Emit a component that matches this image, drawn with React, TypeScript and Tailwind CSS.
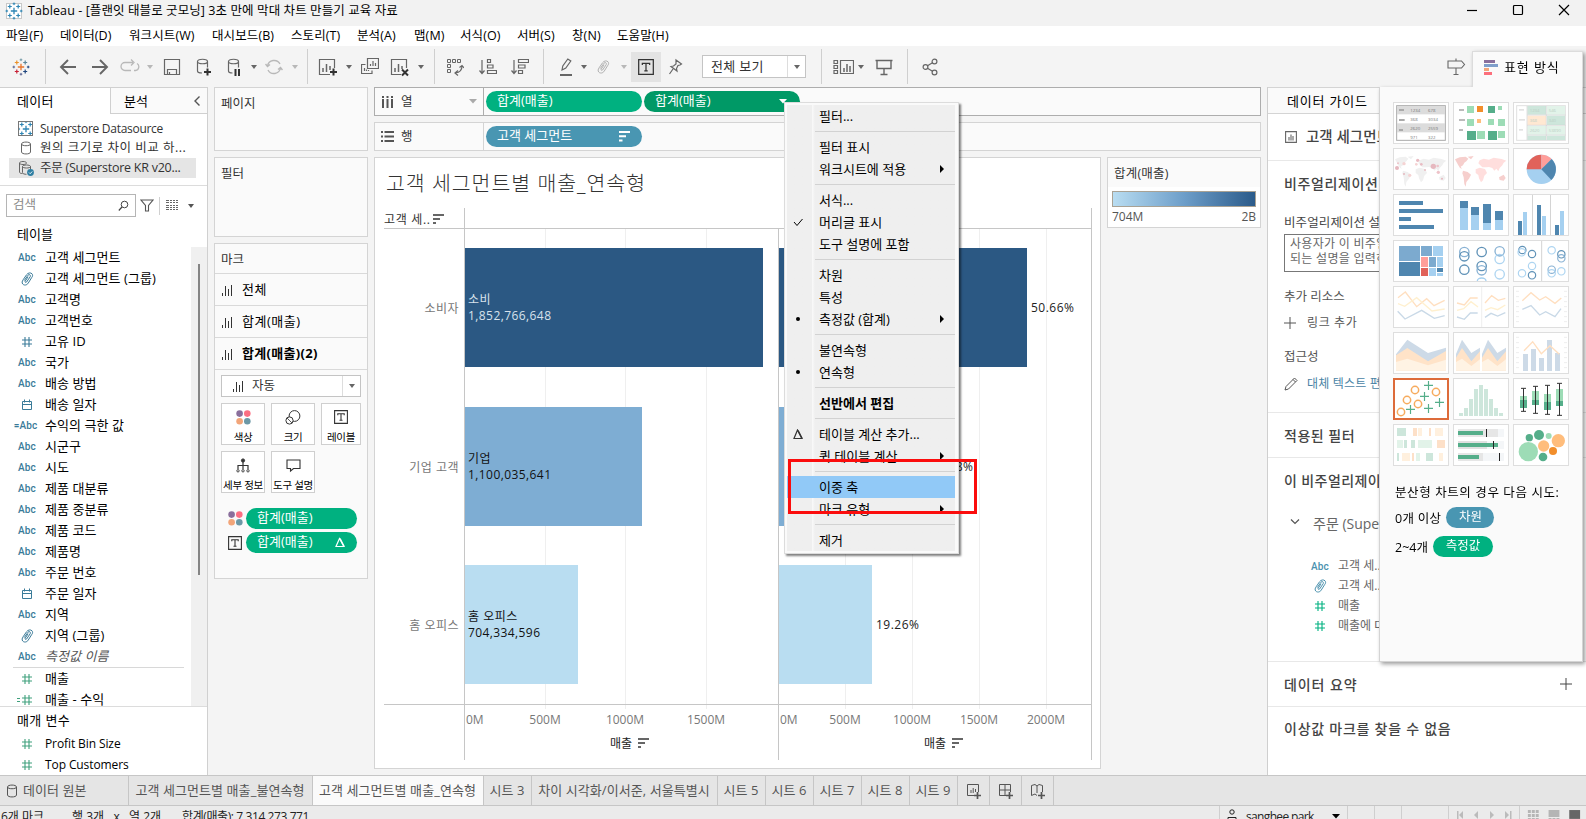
import type { ReactNode } from 'react';

type IconKind = 'abc' | 'clip' | 'hash' | 'date' | 'calcAbc' | 'calcHash';

interface Field {
  label: string;
  kind: IconKind;
  italic?: boolean;
}

const MENUS = [
  { label: '파일(F)', cls: 'w-[54px]' },
  { label: '데이터(D)', cls: 'w-[69px]' },
  { label: '워크시트(W)', cls: 'w-[83px]' },
  { label: '대시보드(B)', cls: 'w-[79px]' },
  { label: '스토리(T)', cls: 'w-[66px]' },
  { label: '분석(A)', cls: 'w-[57px]' },
  { label: '맵(M)', cls: 'w-[46px]' },
  { label: '서식(O)', cls: 'w-[57px]' },
  { label: '서버(S)', cls: 'w-[55px]' },
  { label: '창(N)', cls: 'w-[45px]' },
  { label: '도움말(H)', cls: 'w-[60px]' },
];

const DIMENSIONS: Field[] = [
  { label: '고객 세그먼트', kind: 'abc' },
  { label: '고객 세그먼트 (그룹)', kind: 'clip' },
  { label: '고객명', kind: 'abc' },
  { label: '고객번호', kind: 'abc' },
  { label: '고유 ID', kind: 'hash' },
  { label: '국가', kind: 'abc' },
  { label: '배송 방법', kind: 'abc' },
  { label: '배송 일자', kind: 'date' },
  { label: '수익의 극한 값', kind: 'calcAbc' },
  { label: '시군구', kind: 'abc' },
  { label: '시도', kind: 'abc' },
  { label: '제품 대분류', kind: 'abc' },
  { label: '제품 중분류', kind: 'abc' },
  { label: '제품 코드', kind: 'abc' },
  { label: '제품명', kind: 'abc' },
  { label: '주문 번호', kind: 'abc' },
  { label: '주문 일자', kind: 'date' },
  { label: '지역', kind: 'abc' },
  { label: '지역 (그룹)', kind: 'clip' },
  { label: '측정값 이름', kind: 'abc', italic: true },
];

const MEASURES: Field[] = [
  { label: '매출', kind: 'hash' },
  { label: '매출 - 수익', kind: 'calcHash' },
];

const PARAMETERS: Field[] = [
  { label: 'Profit Bin Size', kind: 'hash' },
  { label: 'Top Customers', kind: 'hash' },
];

interface MenuEntry {
  label: string;
  sub?: boolean;
  mark?: 'check' | 'dot' | 'delta';
  bold?: boolean;
  active?: boolean;
}

const CONTEXT_MENU: MenuEntry[][] = [
  [{ label: '필터...' }],
  [{ label: '필터 표시' }, { label: '워크시트에 적용', sub: true }],
  [{ label: '서식...' }, { label: '머리글 표시', mark: 'check' }, { label: '도구 설명에 포함' }],
  [{ label: '차원' }, { label: '특성' }, { label: '측정값 (합계)', sub: true, mark: 'dot' }],
  [{ label: '불연속형' }, { label: '연속형', mark: 'dot' }],
  [{ label: '선반에서 편집', bold: true }],
  [{ label: '테이블 계산 추가...', mark: 'delta' }, { label: '퀵 테이블 계산', sub: true }],
  [{ label: '이중 축', active: true }, { label: '마크 유형', sub: true }],
  [{ label: '제거' }],
];

/* ---------- small icons ---------- */

function Caret({ className }: { className: string }) {
  return (
    <svg className={`shrink-0 ${className}`} width="6" height="4" viewBox="0 0 6 4">
      <path d="M0 0h6L3 4z" fill="currentColor" />
    </svg>
  );
}

function Svg({ w, h = 20, className = '', children }: { w: number; h?: number; className?: string; children: ReactNode }) {
  return (
    <svg
      className={`shrink-0 ${className}`}
      width={w}
      height={h}
      viewBox={`0 0 ${w} ${h}`}
      fill="none"
      stroke="currentColor"
      strokeWidth="1.2"
    >
      {children}
    </svg>
  );
}

function Clip({ className = '' }: { className?: string }) {
  return (
    <Svg w={13} h={14} className={className}>
      <path d="M3.2 8.6 7 3.2c1-1.4 3.2-.2 2.200 1.500L5.600 10c-.7 1-2 .2-1.400-.8l2.900-4.400M10.600 5.700 7.300 11c-1.500 2.500-4.300 2.500-5.600 1-1-1.300-.6-2.700.4-4.200L5.500 2.800C7 .6 9.700.4 11 1.800c1 1.200.7 2.600-.4 3.900" strokeWidth="1" />
    </Svg>
  );
}

function Hash() {
  return (
    <Svg w={12} h={12}>
      <path d="M4 1v10M8 1v10M1 4h10M1 8h10" strokeWidth="1.100" />
    </Svg>
  );
}

function FieldIcon({ kind }: { kind: IconKind }) {
  switch (kind) {
    case 'abc':
      return <span className="font-['Roboto'] text-[10px] font-medium tracking-[0.2px]">Abc</span>;
    case 'calcAbc':
      return <span className="-ml-[3px] font-['Roboto'] text-[10px] font-medium">=Abc</span>;
    case 'clip':
      return <Clip />;
    case 'date':
      return (
        <Svg w={12} h={12}>
          <path d="M1.500 2.500h9v8h-9zM1.500 5.500h9M3.500.500v3M8.500.500v3" strokeWidth="1" />
        </Svg>
      );
    case 'calcHash':
      return (
        <Svg w={16} h={12} className="-ml-[4px]">
          <path d="M0 4.500h3M0 7.500h3M8 1v10M12 1v10M5 4h10M5 8h10" strokeWidth="1.100" />
        </Svg>
      );
    default:
      return <Hash />;
  }
}

function FieldRow({ field, green }: { field: Field; green?: boolean }) {
  return (
    <div className="flex h-[21px] items-center text-[13px] whitespace-nowrap">
      <span className={`ml-[15px] flex w-6 shrink-0 justify-center ${green ? 'text-[#3fa07c]' : 'text-[#3a7b99]'}`}>
        <FieldIcon kind={field.kind} />
      </span>
      <span className={`ml-[6px] ${field.italic ? 'text-[#555] italic' : 'text-black'}`}>{field.label}</span>
    </div>
  );
}

function SparkleLogo({ mono }: { mono?: boolean }) {
  const c = (color: string) => (mono ? '#2f86b5' : color);
  return (
    <Svg w={18} h={18}>
      <path d="M9 5.800v6.400M5.800 9h6.400" stroke={c('#e8762c')} strokeWidth="1.300" />
      <path d="M4.800 2.500v4M2.800 4.500h4" stroke={c('#eb9129')} />
      <path d="M13.200 2.500v4M11.200 4.500h4" stroke={c('#59879b')} />
      <path d="M4.800 11.500v4M2.800 13.500h4" stroke={c('#c72035')} />
      <path d="M13.200 11.500v4M11.200 13.500h4" stroke={c('#1f457e')} />
      <path d="M9 .500v2.600M7.700 1.800h2.600" stroke={c('#7199a6')} strokeWidth="1" />
      <path d="M9 14.900v2.600M7.700 16.200h2.600" stroke={c('#5b6591')} strokeWidth="1" />
      <path d="M1.800 7.700v2.600M.5 9h2.600" stroke={c('#5b6591')} strokeWidth="1" />
      <path d="M16.200 7.700v2.600M14.900 9h2.600" stroke={c('#1f457e')} strokeWidth="1" />
    </Svg>
  );
}

function SortIcon() {
  return (
    <svg width="11" height="11" viewBox="0 0 11 11" fill="currentColor">
      <path d="M0 0h11v2H0zM0 4.200h7v2H0zM0 8.400h3.500v2H0z" />
    </svg>
  );
}

function MarkBars() {
  return (
    <Svg w={11} h={12} className="text-[#333]">
      <path d="M.5 9v3M3.500 2v10M6.500 5v7M9.500 1v11" strokeWidth="1" />
    </Svg>
  );
}

function TextMark({ size = 14 }: { size?: number }) {
  return (
    <svg width={size} height={size} viewBox="0 0 14 14" fill="none" stroke="#333" className="shrink-0">
      <path d="M.6.6h12.800v12.800H.6zM3.800 5.300V3.800h6.400v1.500M7 3.800v6.500M5.500 10.300h3" strokeWidth="1.100" />
    </svg>
  );
}

function ColorDots() {
  return (
    <svg width="15" height="15" viewBox="0 0 15 15" className="shrink-0">
      <circle cx="3.600" cy="3.600" r="3.300" fill="#8a6f9c" />
      <circle cx="11.300" cy="3.600" r="3.300" fill="#fc6f82" />
      <circle cx="3.600" cy="11.300" r="3.300" fill="#f2a579" />
      <circle cx="11.300" cy="11.300" r="3.300" fill="#6c98a6" />
    </svg>
  );
}

function Database({ className = '' }: { className?: string }) {
  return (
    <Svg w={12} h={14} className={className}>
      <path d="M1.500 3c0-2.600 9-2.600 9 0v8c0 2.600-9 2.600-9 0zM1.500 3c0 2.300 9 2.300 9 0" strokeWidth="1" />
    </Svg>
  );
}

function Sep({ className }: { className: string }) {
  return <span className={`h-[35px] w-px shrink-0 bg-[#cfcfcf] ${className}`} />;
}

/* ---------- window chrome ---------- */

function TitleBar() {
  return (
    <div className="flex h-[26px] shrink-0 items-start bg-[#f2f2f2]">
      <span className="ml-[6px] mt-[3px] flex size-4 items-center justify-center border border-[#c8c8c8] bg-white">
        <SparkleLogo mono />
      </span>
      <span className="ml-[6px] text-[12.500px] leading-[21px] tracking-[0.090px] text-black">
        Tableau - [플랜잇 태블로 굿모닝] 3초 만에 막대 차트 만들기 교육 자료
      </span>
      <span className="ml-auto flex items-center pt-[3px] pr-[16px] text-black">
        <Svg w={12} h={14} className="mr-[34px]"><path d="M1 7.500h10" /></Svg>
        <Svg w={12} h={14} className="mr-[34px]"><rect x="1.500" y="2.500" width="9" height="9" rx="1" /></Svg>
        <Svg w={12} h={14}><path d="m1 2 10 10M11 2 1 12" /></Svg>
      </span>
    </div>
  );
}

function MenuBar() {
  return (
    <nav className="flex h-5 shrink-0 items-center bg-white pt-px pl-[6px] text-[12.500px] tracking-[0.100px] text-black">
      {MENUS.map((m) => (
        <span key={m.label} className={`shrink-0 whitespace-nowrap ${m.cls}`}>{m.label}</span>
      ))}
    </nav>
  );
}

function Toolbar() {
  return (
    <div className="flex h-[41px] shrink-0 items-center bg-[#f4f4f4] text-[#666]">
      <span className="ml-3"><SparkleLogo /></span>
      <Sep className="ml-[15px]" />
      <Svg w={18} className="ml-[13px]"><path d="M9 3 2 10l7 7M2 10h15" strokeWidth="1.900" /></Svg>
      <Svg w={18} className="ml-[14px]"><path d="m9 3 7 7-7 7M16 10H1" strokeWidth="1.900" /></Svg>
      <Svg w={20} className="ml-[11px] text-[#b8b8b8]"><path d="M11 13.500H5a3.500 3.500 0 0 1 0-8h8M17 6.500a3.800 3.800 0 0 1-1.500 7h-1.500M11 2.500l3 3-3 3" strokeWidth="1.300" /></Svg>
      <Caret className="ml-[7px] text-[#b8b8b8]" />
      <Svg w={18} className="ml-[10px]"><path d="M1.500 2.500h15v15h-15zM4.500 17.500V12.500h9v5M6.500 17.500v-2.500" /></Svg>
      <Svg w={18} className="ml-[14px]">
        <path d="M2.500 4.500c0-3 10-3 10 0v6M2.500 4.500c0 3 10 3 10 0M2.500 4.500v9.500c0 1.300 2 2 4.500 2" />
        <path d="M12.500 11.500v7M9 15h7" stroke="#333" strokeWidth="2" />
      </Svg>
      <Svg w={16} className="ml-[13px]">
        <path d="M2.500 4.500c0-3 10-3 10 0v6M2.500 4.500c0 3 10 3 10 0M2.500 4.500v9.500c0 1.300 1.500 2 4 2" />
        <path d="M9.500 12v7M13 12v7" stroke="#333" strokeWidth="2" />
      </Svg>
      <Caret className="ml-[9px]" />
      <Svg w={18} className="ml-[8px] text-[#b8b8b8]"><path d="M2.500 9A6.700 6.700 0 0 1 15 7M15.500 11A6.700 6.700 0 0 1 3 13M.5 7l2 2.500L5 7.500M17.500 13l-2-2.500-2.500 2" strokeWidth="1.400" /></Svg>
      <Caret className="ml-[9px] text-[#b8b8b8]" />
      <Sep className="ml-[9px]" />
      <Svg w={20} className="ml-[10px]">
        <path d="M12 17.500H1.500v-15h15V11" />
        <path d="M5 11v4M8.500 7v8M12 9v4" strokeWidth="1.500" />
        <path d="M15.500 11.500v7M12 15h7" stroke="#333" strokeWidth="2" />
      </Svg>
      <Caret className="ml-[8px]" />
      <Svg w={18} className="ml-[9px]">
        <path d="M6.500 1.500h11v10h-11zM4.500 7.500h-4v9h10.500v-3M9.500 7v2M12 4v5M14.500 6v3M3.500 11v3M5.500 12.500V14M7.500 13v1" />
      </Svg>
      <Svg w={20} className="ml-[11px]">
        <path d="M11 17.500H1.500v-15h15V11" />
        <path d="M5 11v4M8.500 7v8M12 9v3" strokeWidth="1.500" />
        <path d="m12 12.500 6 6M18 12.500l-6 6" stroke="#333" strokeWidth="2" />
      </Svg>
      <Caret className="ml-[8px]" />
      <Sep className="ml-[10px]" />
      <Svg w={18} className="ml-[11px]">
        <path d="M1.500 2.500h3v3h-3zM6.500 2.500h3v3h-3zM11.500 2.500h3v3h-3zM1.500 7.500h3v3h-3zM1.500 12.500h3v3h-3z" strokeWidth="1" />
        <path d="M16 9c0 4-3 6.500-6.500 7M13.500 10.500 16 8.500l2 2.500M12 13.500 9 16l3 2.500" />
      </Svg>
      <Svg w={18} className="ml-[15px]">
        <path d="M3 3v13M.5 13.500 3 16.500l2.500-3M8.500 2.500h3v3h-3zM8.500 8h5.500v3H8.500zM8.500 13.500h9v3h-9z" />
      </Svg>
      <Svg w={18} className="ml-[14px]">
        <path d="M3 3v13M.5 13.500 3 16.500l2.500-3M7.500 2.500h10v3h-10zM7.500 8h6.500v3H7.500zM7.500 13.500h4v3h-4z" />
      </Svg>
      <Sep className="ml-[14px]" />
      <Svg w={14} className="ml-[15px]">
        <path d="m3 13 .8-4 5-7 3 2-5 7zM3 13l4-2" />
        <path d="M1 18h12" strokeWidth="2" />
      </Svg>
      <Caret className="ml-[8px]" />
      <Clip className="ml-[10px] text-[#b0b0b0]" />
      <Caret className="ml-[11px] text-[#b8b8b8]" />
      <span className="ml-1 flex size-[30px] shrink-0 items-center justify-center bg-[#e3e3e3]"><TextMark size={16} /></span>
      <Svg w={15} className="ml-[7px]">
        <path d="m8 3 5.500 4-1.500 1-2 .5-1.500 3 .5 2.500-6-4.500 2.500-.5L8 7zM5 12l-3.500 5" />
      </Svg>
      <span className="ml-[19px] flex h-[23px] w-[104px] shrink-0 items-center border border-[#c4c4c4] bg-white text-[13px] text-[#333]">
        <span className="w-[85px] border-r border-[#ddd] pl-[8px] leading-[21px] tracking-[0.300px]">전체 보기</span>
        <Caret className="ml-[6px] text-[#666]" />
      </span>
      <Sep className="ml-[15px]" />
      <Svg w={21} className="ml-[11px]">
        <path d="M1 3.500h3.500v3H1zM1 8.500h3.500v3H1zM1 13.500h3.500v3H1zM7.500 3.500h13v13h-13z" />
        <path d="M11 11v4M14 7v8M17 9v6" strokeWidth="1.500" />
      </Svg>
      <Caret className="ml-[4px]" />
      <Svg w={18} className="ml-[11px]"><path d="M.5 3.500h17M2 3.500h14v8H2zM9 11.500v5.500M5.500 17.500h7" strokeWidth="1.400" /></Svg>
      <Sep className="ml-[14px]" />
      <Svg w={16} className="ml-[14px]">
        <circle cx="3.500" cy="10" r="2.400" />
        <circle cx="12.500" cy="4.500" r="2.400" />
        <circle cx="12.500" cy="15.500" r="2.400" />
        <path d="m5.500 8.700 5-3M5.500 11.300l5 3" />
      </Svg>
      <Svg w={20} className="ml-[508px]"><path d="M2 4h13.500l3 3.500-3 3.500H2zM10 1.500V4M10 11v6.500M7.500 17.500h5" strokeWidth="1.100" /></Svg>
    </div>
  );
}

/* ---------- data pane ---------- */

function DataPane() {
  return (
    <aside className="flex w-52 shrink-0 flex-col border-r border-[#d0d0d0] bg-white">
      <div className="flex h-[27px] shrink-0 border-t border-[#d0d0d0] text-[13px] leading-[26px] text-black">
        <span className="w-[110px] pl-[17px] tracking-[0.300px]">데이터</span>
        <span className="flex flex-1 items-center border-b border-l border-[#d0d0d0] bg-[#fafafa] pl-[13px]">
          분석
          <Svg w={8} h={12} className="mr-[6px] ml-auto text-[#555]"><path d="M6.500 1.500 2 6l4.500 4.500" strokeWidth="1.400" /></Svg>
        </span>
      </div>
      <div className="h-[72px] shrink-0 border-b border-[#dcdcdc] pt-[5px] pl-[9px] text-[12.500px] text-[#333]">
        <div className="flex h-[19px] items-center">
          <span className="ml-[9px] flex size-[15px] items-center justify-center overflow-hidden border border-[#777]"><SparkleLogo mono /></span>
          <span className="ml-[7px] text-[12px] tracking-[-0.280px]">Superstore Datasource</span>
        </div>
        <div className="flex h-5 items-center">
          <Database className="ml-[11px] text-[#666]" />
          <span className="ml-[8px] tracking-[0.500px] whitespace-nowrap">원의 크기로 차이 비교 하...</span>
        </div>
        <div className="flex h-5 w-[187px] items-center bg-[#e5e5e5]">
          <Svg w={16} h={16} className="ml-[9px] text-[#666]">
            <path d="M1.500 3c0-2 7-2 7 0M1.500 3v9c0 1 1 1.500 3 1.500M1.500 3c0 2 7 2 7 0M4.500 6.500c0-2 8-2 8 0v3M4.500 6.500c0 2 8 2 8 0M4.500 6.500v6c0 1.300 2 1.800 4 1.800" strokeWidth="1" />
            <circle cx="12.500" cy="12.500" r="3.400" fill="#2f7fa3" stroke="none" />
            <path d="m11 12.500 1.200 1.200 2-2.200" stroke="#fff" strokeWidth=".9" />
          </Svg>
          <span className="ml-[6px] pt-px text-[12.500px] tracking-[-0.250px] whitespace-nowrap">주문 (Superstore KR v20...</span>
        </div>
      </div>
      <div className="flex h-[38px] shrink-0 items-center pt-[1px]">
        <span className="ml-[6px] flex h-[23px] w-[130px] items-center justify-between border border-[#b5b5b5] pr-[6px] pl-[6px] text-[12.500px] text-[#888]">
          검색
          <Svg w={11} h={12} className="text-[#444]"><circle cx="6.500" cy="4.500" r="3.300" strokeWidth="1" /><path d="M4 7 .8 10.500" /></Svg>
        </span>
        <Svg w={14} h={13} className="ml-1 text-[#555]"><path d="M1 1h12L8.500 6.500V12h-3V6.500z" strokeWidth="1.100" /></Svg>
        <span className="ml-[5px] h-[18px] w-px bg-[#d0d0d0]" />
        <svg width="13" height="11" viewBox="0 0 13 11" fill="#666" className="ml-[6px] shrink-0">
          {[0, 2, 5, 7, 9].map((y) => (
            <path key={y} d={`M0 ${y}h3v1H0zM4 ${y}h2v1H4zM7 ${y}h2v1H7zM10 ${y}h2v1h-2z`} />
          ))}
        </svg>
        <Caret className="ml-[9px] text-[#555]" />
      </div>
      <div className="h-[23px] shrink-0 pl-[17px] text-[13px] leading-[20px] text-black">테이블</div>
      <div className="flex h-[460px] shrink-0 overflow-hidden border-b border-[#dcdcdc]">
        <div className="w-[191px] shrink-0 tracking-[0.060px]">
          {DIMENSIONS.map((f) => <FieldRow key={f.label} field={f} />)}
          <div className="ml-[13px] h-px w-[171px] bg-[#d8d8d8]" />
          {MEASURES.map((f) => <FieldRow key={f.label} field={f} green />)}
        </div>
        <div className="flex-1 bg-[#f0f0f0] pt-[17px] pl-[7px]">
          <div className="h-[311px] w-[2px] bg-[#858585]" />
        </div>
      </div>
      <div className="h-[26px] shrink-0 pl-[17px] text-[13px] leading-[26px] tracking-[0.400px] text-black">매개 변수</div>
      {PARAMETERS.map((f) => (
        <div key={f.label} className="text-[12px] tracking-[-0.100px] [&_span]:text-[12px]"><FieldRow field={f} green /></div>
      ))}
    </aside>
  );
}

/* ---------- pages / filters / marks ---------- */

function MarkButton({ label, cls, children }: { label: string; cls: string; children: ReactNode }) {
  return (
    <span className={`flex h-[42px] flex-col items-center justify-between border border-[#cfcfcf] bg-white pt-[6px] text-[10.500px] leading-[13px] whitespace-nowrap text-black ${cls}`}>
      {children}
      <span className="tracking-[-0.300px]">{label}</span>
    </span>
  );
}

function CardsColumn() {
  return (
    <div className="ml-[6px] flex w-[154px] shrink-0 flex-col gap-[6px] text-[12.500px] text-[#333]">
      <div className="h-[64px] border border-[#d4d4d4] bg-[#fafafa] pl-[6px] leading-[31px]">페이지</div>
      <div className="h-[80px] border border-[#d4d4d4] bg-[#fafafa] pl-[6px] leading-[31px]">필터</div>
      <div className="h-[336px] border border-[#d4d4d4] bg-[#fafafa]">
        <div className="h-[30px] border-b border-[#d9d9d9] pl-[6px] leading-[31px]">마크</div>
        {['전체', '합계(매출)', '합계(매출)(2)'].map((t, i) => (
          <div key={t} className={`flex h-8 items-center gap-[9px] border-b border-[#d9d9d9] pl-[7px] text-[13px] text-black ${i === 2 ? 'font-bold tracking-[0.300px]' : 'tracking-[0.500px]'}`}>
            <MarkBars />{t}
          </div>
        ))}
        <div className="mx-[6px] mt-[5px] flex h-[22px] w-[140px] items-center border border-[#c4c4c4] bg-white">
          <span className="flex h-full w-[121px] items-center gap-[8px] border-r border-[#ddd] pl-[11px]"><MarkBars />자동</span>
          <Caret className="ml-[6px] text-[#666]" />
        </div>
        <div className="mt-[6px] ml-[6px] flex w-[141px] flex-wrap gap-x-[6px] gap-y-[6px]">
          <MarkButton label="색상" cls="w-11"><ColorDots /></MarkButton>
          <MarkButton label="크기" cls="w-11">
            <Svg w={16} h={15} className="text-[#333]"><circle cx="9.500" cy="6" r="5.400" strokeWidth="1" /><circle cx="4.500" cy="10.500" r="3.600" fill="#fff" strokeWidth="1" /><path d="m2 8 5 5" strokeWidth=".8" /></Svg>
          </MarkButton>
          <MarkButton label="레이블" cls="w-10"><TextMark /></MarkButton>
          <MarkButton label="세부 정보" cls="w-11">
            <Svg w={14} h={15} className="text-[#333]"><circle cx="7" cy="2.500" r="1.600" fill="currentColor" strokeWidth="1" /><path d="M7 4v7M2 11V7.500h10V11" /><circle cx="2" cy="12.800" r="1.200" strokeWidth=".9" /><circle cx="7" cy="12.800" r="1.200" strokeWidth=".9" /><circle cx="12" cy="12.800" r="1.200" strokeWidth=".9" /></Svg>
          </MarkButton>
          <MarkButton label="도구 설명" cls="w-11">
            <Svg w={15} h={15} className="text-[#333]"><path d="M1 2h13v8.500H7.500L4.500 13v-2.500H1z" strokeWidth="1.100" /></Svg>
          </MarkButton>
        </div>
        <div className="mt-[15px] ml-[13px] flex flex-col gap-[3px] text-[13px] text-white">
          <div className="flex h-[21px] items-center gap-[3px]">
            <ColorDots />
            <span className="flex h-[21px] w-[111px] items-center rounded-full bg-[#00b180] pb-[2px] pl-[11px]">합계(매출)</span>
          </div>
          <div className="flex h-[21px] items-center gap-[4px]">
            <TextMark />
            <span className="flex h-[21px] w-[111px] items-center justify-between rounded-full bg-[#00b180] pr-[12px] pb-[2px] pl-[11px]">
              합계(매출)
              <Svg w={10} h={11} className="mt-[2px]"><path d="M4.500 1.500 1 9.500h8z" /><path d="M5 1.500 9 9.500" strokeWidth="1.600" /></Svg>
            </span>
          </div>
        </div>
      </div>
    </div>
  );
}

/* ---------- shelves ---------- */

function Shelves() {
  return (
    <>
      <div className="flex h-[29px] items-center border border-[#adadad] bg-[#fafafa] text-[13px]">
        <span className="flex h-full w-[109px] shrink-0 items-center border-r border-[#adadad] pl-[7px] text-[#333]">
          <svg width="11" height="12" viewBox="0 0 11 12" fill="#555"><path d="M0 0h2v2H0zM4.500 0h2v2h-2zM9 0h2v2H9zM0 3h2v9H0zM4.500 3h2v9h-2zM9 3h2v9H9z" /></svg>
          <span className="ml-[8px] pt-[2px] text-[12.500px]">열</span>
          <svg width="8" height="5" viewBox="0 0 8 5" className="mr-[6px] ml-auto"><path d="M0 0h8L4 4.500z" fill="#aaa" /></svg>
        </span>
        <span className="ml-[2px] h-[21px] w-[156px] shrink-0 rounded-full bg-[#00b180] pl-[11px] leading-[18px] text-white">합계(매출)</span>
        <span className="ml-[2px] flex h-[21px] w-[156px] shrink-0 rounded-full bg-[#009966] pl-[11px] leading-[18px] text-white">
          합계(매출)
          <svg width="8" height="5" viewBox="0 0 8 5" className="mt-[8px] mr-[13px] ml-auto"><path d="M0 0h8L4 4.500z" fill="#fff" /></svg>
        </span>
      </div>
      <div className="mt-[6px] flex h-[29px] items-center border border-[#d4d4d4] bg-[#fafafa] text-[13px]">
        <span className="flex h-full w-[109px] shrink-0 items-center border-r border-[#d4d4d4] pl-[6px] text-[#333]">
          <svg width="13" height="11" viewBox="0 0 13 11" fill="#555"><path d="M0 0h2v2H0zM3.500 0H13v2H3.500zM0 4.500h2v2H0zM3.500 4.500H13v2H3.500zM0 9h2v2H0zM3.500 9H13v2H3.500z" /></svg>
          <span className="ml-[7px] pt-[2px] text-[12.500px]">행</span>
        </span>
        <span className="ml-[2px] flex h-[21px] w-[156px] shrink-0 justify-between rounded-full bg-[#4996b2] pr-[12px] pl-[11px] leading-[18px] text-white">
          고객 세그먼트
          <span className="pt-[5px]"><SortIcon /></span>
        </span>
      </div>
    </>
  );
}

/* ---------- bar chart ---------- */

const ROWS = [
  { name: '소비자', mark: '소비', value: '1,852,766,648', pct: '50.66%', y: 90, w1: 298, w2: 248, fill: '#2b5883', ink: '#d8e2ec' },
  { name: '기업 고객', mark: '기업', value: '1,100,035,641', pct: '30.08%', y: 249, w1: 177, w2: 147, fill: '#7eadd3', ink: '#111' },
  { name: '홈 오피스', mark: '홈 오피스', value: '704,334,596', pct: '19.26%', y: 407, w1: 113, w2: 93, fill: '#b9ddf1', ink: '#111' },
];

function Ticks({ xs, labels }: { xs: number[]; labels: string[] }) {
  return (
    <>
      {xs.map((x, i) => (
        <g key={x}>
          <path d={`M${x + 0.5} 71v480`} stroke="#efefef" />
          <text x={x} y="566" textAnchor="middle" fill="#787878">{labels[i]}</text>
        </g>
      ))}
    </>
  );
}

function SortGlyph({ x, y }: { x: number; y: number }) {
  return <path d={`M${x} ${y}h11v2h-11zM${x} ${y + 4}h7v2h-7zM${x} ${y + 8}h3v2h-3z`} fill="#666" />;
}

function Worksheet() {
  return (
    <div className="w-[727px] shrink-0 border border-[#d4d4d4] bg-white">
      <svg width="725" height="610" viewBox="0 0 725 610" fontSize="12" className="block">
        <text x="11" y="33" fontSize="20.500" fontWeight="300" fill="#333" textLength="259">고객 세그먼트별 매출_연속형</text>
        <text x="9" y="66" fontSize="12" fill="#333" textLength="46">고객 세..</text>
        <SortGlyph x={58} y={56} />
        <Ticks xs={[170, 250, 331]} labels={['500M', '1000M', '1500M']} />
        <Ticks xs={[470, 537, 604, 671]} labels={['500M', '1000M', '1500M', '2000M']} />
        <text x="91" y="566" fill="#787878">0M</text>
        <text x="405" y="566" fill="#787878">0M</text>
        {ROWS.map((r) => (
          <g key={r.name}>
            <rect x="90" y={r.y} width={r.w1} height="119" fill={r.fill} />
            <rect x="404" y={r.y} width={r.w2} height="119" fill={r.fill} />
            <text x="84" y={r.y + 65} textAnchor="end" fill="#777" letterSpacing=".5">{r.name}</text>
            <text x="93" y={r.y + 56} fill={r.ink} letterSpacing=".5">{r.mark}</text>
            <text x="93" y={r.y + 72} fill={r.ink} textLength={r.value.length > 11 ? 83 : 72}>{r.value}</text>
            <text x={404 + r.w2 + 4} y={r.y + 64} fill="#222" textLength="43">{r.pct}</text>
          </g>
        ))}
        <path d="M9 70.500h708M9 546.500h708M89.500 50v552M403.500 71v531M716.500 50v552" stroke="#c6c6c6" fill="none" />
        <text x="235" y="590" fill="#222">매출</text>
        <SortGlyph x={263} y={580} />
        <text x="549" y="590" fill="#222">매출</text>
        <SortGlyph x={577} y={580} />
      </svg>
    </div>
  );
}

function Legend() {
  return (
    <div className="h-[71px] w-[154px] border border-[#d4d4d4] bg-white">
      <div className="h-[29px] bg-[#fafafa] pl-[6px] text-[12.500px] leading-[32px] tracking-[0.200px] text-[#333]">합계(매출)</div>
      <div className="mx-[4px] mt-[4px] h-4 border border-[#a9a294] bg-linear-to-r from-[#b9ddf1] via-[#6d9ec9] to-[#2b5b8a]" />
      <div className="flex justify-between px-[4px] text-[12px] leading-[19px] text-[#555]">
        <span>704M</span>
        <span>2B</span>
      </div>
    </div>
  );
}

/* ---------- data guide ---------- */

function DataGuide() {
  return (
    <section className="ml-[6px] flex w-[319px] shrink-0 flex-col overflow-hidden border-l border-[#cfcfcf] bg-white whitespace-nowrap text-[#444]">
      <div className="h-[27px] shrink-0 border-y border-[#d4d4d4] bg-[#fafafa] pl-[19px] text-[13px] leading-[26px] tracking-[0.800px] text-black">데이터 가이드</div>
      <div className="flex h-[47px] shrink-0 items-center border-b border-[#e8e8e8] pl-[17px] text-[14.500px] font-medium">
        <Svg w={12} h={12} className="mr-[9px] text-[#666]"><path d="M.6.6h10.800v10.800H.6z" strokeWidth="1.100" /><path d="M3 9.500V6h2V3.500h2V5h2v4.500z" fill="#aaa" stroke="none" /></Svg>
        고객 세그먼트별 매출
      </div>
      <div className="h-[252px] shrink-0 border-b border-[#e8e8e8] pl-[16px]">
        <div className="h-[46px] text-[14px] leading-[46px] font-medium tracking-[0.600px]">비주얼리제이션</div>
        <div className="h-[27px] text-[12.500px] leading-[32px] tracking-[0.100px]">비주얼리제이션 설명</div>
        <div className="h-[38px] w-[280px] border border-[#777] px-[5px] py-px text-[12px] leading-[15px] tracking-[0.300px] text-[#666]">
          사용자가 이 비주얼리제이션을<br />되는 설명을 입력하세요
        </div>
        <div className="h-[48px] text-[12.500px] leading-[50px] text-[#555]">추가 리소스</div>
        <div className="flex h-[6px] items-center text-[12px] text-[#555]">
          <Svg w={12} h={12} className="mr-[11px]"><path d="M6 0v12M0 6h12" strokeWidth="1" /></Svg>
          <span className="tracking-[0.600px]">링크 추가</span>
        </div>
        <div className="h-[60px] text-[12.500px] leading-[62px] text-[#555]">접근성</div>
        <div className="-mt-[6px] flex h-[8px] items-center text-[12px] text-[#555]">
          <Svg w={14} h={14} className="mr-[9px]"><path d="m1 13 1-3.500L10.500 1 13 3.500 4.500 12zM9 2.500 11.500 5" strokeWidth="1" /></Svg>
          <span className="tracking-[0.200px] text-[#4a83a5]">대체 텍스트 편집</span>
        </div>
      </div>
      <div className="h-[45px] shrink-0 border-b border-[#e8e8e8] pl-[16px] text-[14px] leading-[45px] font-medium tracking-[0.500px]">적용된 필터</div>
      <div className="h-[204px] shrink-0 border-b border-[#e8e8e8] pl-[16px]">
        <div className="h-[45px] text-[14px] leading-[45px] font-medium tracking-[0.400px]">이 비주얼리제이션의 데이터</div>
        <div className="flex h-[41px] items-center text-[14px] text-[#666]">
          <Svg w={10} h={8} className="-mt-[4px] mr-[13px] ml-[6px] text-[#555]"><path d="m1 1.500 4 4 4-4" /></Svg>주문 (Superstore)
        </div>
        <div className="mt-[12px] text-[12px] text-[#666]">
          {(['고객 세그먼트', '고객 세그먼트 (그룹)', '매출', '매출에 대한 비율'] as const).map((t, i) => (
            <div key={t} className="flex h-5 items-center">
              <span className={`ml-[26px] flex w-5 justify-center ${i < 2 ? 'text-[#4a91ae]' : 'text-[#00b180]'}`}>
                <FieldIcon kind={i === 0 ? 'abc' : i === 1 ? 'clip' : 'hash'} />
              </span>
              <span className="ml-[8px]">{i < 2 ? '고객 세...' : t}</span>
            </div>
          ))}
        </div>
      </div>
      <div className="flex h-[45px] shrink-0 items-center justify-between border-b border-[#e8e8e8] pr-[14px] pl-[16px] text-[14px] font-medium tracking-[0.900px]">
        데이터 요약
        <Svg w={12} h={12}><path d="M6 0v12M0 6h12" strokeWidth="1" /></Svg>
      </div>
      <div className="pl-[16px] text-[14px] leading-[44px] font-medium tracking-[0.750px]">이상값 마크를 찾을 수 없음</div>
    </section>
  );
}

/* ---------- show me panel ---------- */

function Thumb({ children, selected }: { children: ReactNode; selected?: boolean }) {
  return (
    <svg width="56" height="42" viewBox="0 0 168 126" className="block">
      <rect x="1.500" y="1.500" width="165" height="123" fill="#fff" stroke="#dedede" strokeWidth="3" />
      {children}
      {selected && <rect x="3" y="3" width="162" height="120" fill="none" stroke="#dd6b3a" strokeWidth="6" />}
    </svg>
  );
}

// [x, y, width, height, fill]
type Box = [number, number, number, number, string];

function Boxes({ data }: { data: Box[] }) {
  return <>{data.map((b, i) => <rect key={i} x={b[0]} y={b[1]} width={b[2]} height={b[3]} fill={b[4]} />)}</>;
}

// [cx, cy, r, color]
type Dot = [number, number, number, string];

function Rings({ data, width = 4 }: { data: Dot[]; width?: number }) {
  return <>{data.map((d, i) => <circle key={i} cx={d[0]} cy={d[1]} r={d[2]} fill="none" stroke={d[3]} strokeWidth={width} opacity=".9" />)}</>;
}

function Dots({ data }: { data: Dot[] }) {
  return <>{data.map((d, i) => <circle key={i} cx={d[0]} cy={d[1]} r={d[2]} fill={d[3]} />)}</>;
}

const DB = '#4f86af';
const LB = '#a5d0f0';
const MB = '#7caacf';
const DG = '#55ae8a';
const LG = '#9ddcb6';
const OR = '#f28e2b';
const LO = '#ffbd7c';

function WorldMap({ left, right }: { left: string; right: string }) {
  return (
    <>
      <path d="M6 34l14-6 18-2 8 6-6 8-6 4-4 8-7 4 4 6-6-2-6-10zM44 26l18-2-8 10zM30 68l14 4 10 8-6 12-8 10-2 14-4-8-2-20-4-12z" fill={left} />
      <path d="M76 46l4-9 12-5 16 3 14-6 24 4 14 5-8 6-4 8-8 8-4 10-6-8-6 6-6-8-10-3-8 1-12 0zM68 64l12-5 16 4 6 12-8 8-4 14-6 6-6-12-2-10-8-6z" fill={right} />
      <path d="M138 88l14-8 6 10-6 8-12-2z" fill={left} />
    </>
  );
}

function Ruler({ x }: { x: number }) {
  return <path d={`M${x} 16h9M${x} 32h9M${x} 47h9M${x} 62h9M${x} 77h9M${x} 92h9M${x} 107h9`} stroke="#eee" strokeWidth="3" />;
}

function Thumbnails() {
  return (
    <div className="grid grid-cols-[56px_56px_56px] gap-1">
      <Thumb>
        <rect x="11" y="11" width="146" height="104" fill="#fff" stroke="#aaa" strokeWidth="3" />
        <Boxes data={[[12, 12, 144, 25, '#dcdcdc'], [12, 64, 144, 27, '#dcdcdc'], [18, 21, 15, 6, '#aaa'], [18, 51, 17, 6, '#aaa'], [18, 81, 12, 6, '#aaa']]} />
        <g fontSize="13" fill="#777">
          <text x="52" y="30">1234</text><text x="105" y="30">678</text>
          <text x="52" y="58">368</text><text x="105" y="58">3034</text>
          <text x="52" y="85">2620</text><text x="105" y="85">2559</text>
          <text x="52" y="110">971</text><text x="105" y="110">322</text>
        </g>
      </Thumb>
      <Thumb>
        <Boxes data={[[18, 21, 15, 6, '#bbb'], [18, 51, 18, 6, '#bbb'], [18, 81, 12, 6, '#bbb'], [42, 12, 21, 21, LG], [72, 12, 18, 18, OR], [105, 12, 21, 21, DG], [135, 12, 12, 12, LG], [42, 51, 21, 21, LG], [72, 51, 12, 12, LO], [105, 51, 18, 18, LG], [135, 51, 21, 21, LG], [42, 87, 27, 27, DG], [72, 87, 24, 24, LG], [105, 87, 27, 27, DG], [135, 87, 21, 21, LG]]} />
      </Thumb>
      <Thumb>
        <rect x="11" y="11" width="146" height="104" fill="#fff" stroke="#e0e0e0" strokeWidth="3" />
        <Boxes data={[[18, 21, 15, 5, '#e2e2e2'], [18, 51, 18, 5, '#e2e2e2'], [18, 81, 12, 5, '#e2e2e2'], [43, 12, 56, 26, '#cde6db'], [102, 12, 54, 26, '#e2f3e9'], [43, 41, 56, 28, '#ffe8d2'], [102, 41, 54, 28, '#cde6db'], [43, 72, 56, 26, '#e2f3e9'], [102, 72, 54, 26, '#e2f3e9'], [43, 101, 56, 13, '#cde6db'], [102, 101, 54, 13, '#cde6db']]} />
        <path d="M42 12v102M100 12v102M42 39h115M42 70h115M42 99h115" stroke="#d0d0d0" strokeWidth="2" />
        <g fontSize="13" fill="#bccfc5">
          <text x="50" y="30">1234</text><text x="107" y="30">546</text>
          <text x="50" y="60">368</text><text x="107" y="60">340</text>
          <text x="50" y="90">2620</text><text x="107" y="90">53890</text>
        </g>
      </Thumb>
      <Thumb>
        <WorldMap left="#f0f0f0" right="#f0f0f0" />
        <Dots data={[[12, 60, 6, '#e6b8bf'], [15, 46, 3, '#eec3c9'], [33, 47, 5, '#f5d3d3'], [74, 37, 5, '#e9bcc3'], [85, 49, 4, '#e9bcc3'], [70, 49, 4, '#f5d3d3'], [121, 55, 8, '#e6b8bf'], [134, 54, 4, '#eec3c9'], [136, 73, 5, '#eec3c9'], [96, 66, 3, '#e9bcc3'], [33, 78, 3, '#e6b8bf'], [50, 82, 5, '#f5d3d3'], [147, 92, 3, '#e6b8bf']]} />
      </Thumb>
      <Thumb><WorldMap left="#f6cfcd" right="#ffdedd" /></Thumb>
      <Thumb>
        <circle cx="85" cy="64" r="44" fill={LB} />
        <path d="M85 64H41A44 44 0 0 1 85 20z" fill="#e1625a" />
        <path d="M85 64V20a44 44 0 0 1 31 13z" fill="#ff9e9a" />
        <path d="m85 64 31-31a44 44 0 0 1-1 63z" fill={DB} />
      </Thumb>
      <Thumb><Boxes data={[[18, 21, 72, 12, DB], [18, 45, 132, 12, DB], [18, 69, 36, 12, DB], [18, 93, 105, 12, DB]]} /></Thumb>
      <Thumb><Boxes data={[[21, 21, 24, 21, DB], [21, 42, 24, 66, LB], [54, 39, 24, 24, DB], [54, 63, 24, 45, LB], [90, 30, 24, 57, DB], [90, 87, 24, 21, LB], [126, 51, 24, 27, DB], [126, 78, 24, 30, LB]]} /></Thumb>
      <Thumb><Boxes data={[[57, 3, 3, 120, '#d4d4d4'], [111, 3, 3, 120, '#d4d4d4'], [15, 81, 12, 42, DB], [30, 54, 12, 69, LB], [72, 33, 12, 90, DB], [87, 66, 12, 57, LB], [126, 93, 12, 30, DB], [141, 51, 12, 72, LB]]} /></Thumb>
      <Thumb><Boxes data={[[18, 18, 63, 45, MB], [18, 66, 63, 42, DB], [84, 18, 33, 30, MB], [120, 18, 30, 30, LB], [84, 51, 21, 30, '#ff9e9a'], [108, 51, 21, 30, MB], [132, 51, 18, 30, LB], [84, 84, 21, 24, '#e1625a'], [108, 84, 21, 24, LB], [132, 84, 18, 12, DB], [132, 99, 18, 9, LB]]} /></Thumb>
      <Thumb><Rings data={[[34, 36, 14, MB], [34, 49, 14, DB], [34, 89, 14, DB], [86, 36, 14, DB], [86, 78, 14, DB], [86, 91, 14, MB], [140, 34, 14, MB], [140, 57, 14, LB], [140, 103, 14, LB]]} /><path d="M73 123a13 9 0 0 1 26 0" fill="none" stroke={LB} strokeWidth="4" /></Thumb>
      <Thumb>
        <path d="M86 3v120" stroke="#d4d4d4" strokeWidth="3" />
        <Rings width={3.500} data={[[28, 30, 11, DB], [26, 37, 11, LB], [57, 42, 11, DB], [57, 78, 11, LB], [57, 106, 11, DB], [27, 100, 11, LB], [116, 31, 11, LB], [145, 43, 11, DB], [145, 55, 11, MB], [116, 89, 11, MB], [116, 100, 11, LB], [145, 94, 11, LB]]} />
      </Thumb>
      <Thumb>
        <g fill="none" strokeWidth="4">
          <path d="m15 35 22-17 34 44 30-24 22 21 32-16" stroke="#ffdfc0" />
          <path d="m15 53 20 8 36-26 46 40 38-6" stroke="#fff0cf" />
          <path d="m14 76 22 23 50-26 38 24 31-8" stroke="#c9d9e7" />
        </g>
      </Thumb>
      <Thumb>
        <path d="M86 3v120" stroke="#e6e6e6" strokeWidth="2" />
        <g fill="none" strokeWidth="4">
          <path d="m12 51 22 6 18-21h22M96 51l20-22 20 14 21-6" stroke="#ffdfc0" />
          <path d="m12 73 20-5 22-21 21 16M96 73l18-8 20 6 23-14" stroke="#fff0cf" />
          <path d="m12 93 22 7 18-19h22M96 94l18-12 20 8 23-10" stroke="#c9d9e7" />
        </g>
      </Thumb>
      <Thumb>
        <Ruler x={9} /><Ruler x={153} />
        <g fill="none" strokeWidth="4">
          <path d="m28 44 26-24 26 22 18-10 28 20 19-16" stroke="#ffdfc0" />
          <path d="m28 70 26-11 26 28 18-10 28 15 18-24" stroke="#c9d9e7" />
        </g>
      </Thumb>
      <Thumb>
        <path d="m9 67 34-44 62 40 54-16v69H9z" fill="#cddae7" />
        <path d="m9 70 34-22 62 40 54-31v59H9z" fill="#ffe3c8" />
        <path d="m9 90 34-10 62 20 54-17v33H9z" fill="#fff3e4" />
      </Thumb>
      <Thumb>
        <path d="m9 66 18-43 28 40 26-16v69H9zM87 66l18-43 28 40 26-16v69H87z" fill="#cddae7" />
        <path d="m9 77 18-29 28 40 26-30v58H9zM87 77l18-29 28 40 26-30v58H87z" fill="#ffe3c8" />
        <path d="m9 90 18-10 28 22 26-20v34H9zM87 90l18-10 28 22 26-20v34H87z" fill="#fff3e4" />
      </Thumb>
      <Thumb>
        <Ruler x={9} /><Ruler x={153} />
        <Boxes data={[[30, 66, 15, 51, '#cddae7'], [54, 51, 15, 66, '#cddae7'], [78, 78, 15, 39, '#cddae7'], [102, 24, 15, 93, '#cddae7'], [126, 63, 15, 54, '#cddae7']]} />
        <path d="m33 56 26-27 26 36 26-24 28 26" fill="none" stroke="#ffdfc0" strokeWidth="4" />
      </Thumb>
      <Thumb selected>
        <Rings width={4.500} data={[[66, 36, 11, '#f5a24c'], [129, 42, 11, '#f5a24c'], [42, 66, 11, '#f5a24c'], [75, 78, 11, '#f5a24c'], [24, 102, 11, '#f5a24c']]} />
        <path d="M93 22h27M106.500 9v27M81 55h27M94.500 42v27M126 73h27M139.500 60v27M93 91h27M106.500 78v27M39 94h27M52.500 81v27" stroke={DG} strokeWidth="3.500" />
      </Thumb>
      <Thumb>
        <Boxes data={[[18, 105, 12, 9, '#cde6db'], [33, 90, 12, 24, '#cde6db'], [48, 63, 12, 51, '#cde6db'], [63, 33, 12, 81, '#cde6db'], [78, 21, 12, 93, '#cde6db'], [93, 33, 12, 81, '#cde6db'], [108, 63, 12, 51, '#cde6db'], [123, 90, 12, 24, '#cde6db'], [138, 105, 12, 9, '#cde6db']]} />
      </Thumb>
      <Thumb>
        <Boxes data={[[21, 54, 21, 12, LG], [21, 66, 21, 24, DG], [57, 39, 21, 27, LG], [57, 66, 21, 15, DG], [93, 48, 21, 24, LG], [93, 72, 21, 24, DG], [129, 33, 21, 36, LG], [129, 69, 21, 15, DG]]} />
        <path d="M24 31h15M24 100h15M31.500 31v69M60 25h15M60 106h15M67.500 25v81M96 22h15M96 109h15M103.500 22v87M132 16h15M132 112h15M139.500 16v96" stroke="#333" strokeWidth="3" />
      </Thumb>
      <Thumb>
        <Boxes data={[[12, 12, 27, 24, '#cde6db'], [60, 12, 12, 24, '#fde0c8'], [75, 12, 12, 24, '#fff0de'], [108, 12, 6, 24, '#fde0c8'], [126, 12, 24, 24, '#fff0de'], [12, 48, 18, 24, '#e2f3e9'], [33, 48, 9, 24, '#cde6db'], [54, 48, 12, 24, '#cde6db'], [75, 48, 42, 24, '#e2f3e9'], [132, 48, 24, 24, '#fde0c8'], [12, 87, 6, 24, '#cde6db'], [27, 87, 24, 24, '#fff0de'], [57, 87, 6, 24, '#fde0c8'], [69, 87, 12, 24, '#e2f3e9'], [99, 87, 21, 24, '#cde6db'], [138, 87, 12, 24, '#fff0de']]} />
      </Thumb>
      <Thumb>
        <Boxes data={[[15, 15, 138, 24, '#f4f6f8'], [15, 15, 120, 24, '#e6e6e6'], [15, 51, 138, 24, '#f4f6f8'], [15, 51, 87, 24, '#e0e0e0'], [15, 87, 138, 24, '#f4f6f8'], [15, 87, 75, 24, '#e6e6e6'], [15, 21, 75, 12, DG], [15, 57, 120, 12, DG], [15, 93, 63, 12, DG], [99, 15, 3, 24, '#222'], [120, 51, 3, 24, '#222'], [138, 87, 3, 24, '#222']]} />
      </Thumb>
      <Thumb>
        <Dots data={[[46, 83, 29, LG], [49, 41, 11, DG], [78, 33, 15, DG], [107, 36, 9, LG], [136, 50, 20, LO], [92, 66, 17, LO], [120, 81, 12, OR], [90, 99, 13, DG]]} />
      </Thumb>
    </div>
  );
}

function ShowMe() {
  return (
    <div className="absolute top-[51px] right-[3px] flex w-[204px] flex-col items-end drop-shadow-[2px_2px_2px_rgba(0,0,0,0.400)]">
      <div className="flex h-[37px] w-[111px] items-center border border-b-0 border-[#dcdcdc] bg-[#fafafa] pb-[6px] pl-[11px] text-[13px] text-black">
        <svg width="14" height="15" viewBox="0 0 14 15" className="mr-[6px] shrink-0">
          <path d="M0 0h11v3H0z" fill="#8a6f9c" />
          <path d="M0 4h14v3H0z" fill="#7f9fcb" />
          <path d="M0 8h5v3H0z" fill="#f2a579" />
          <path d="M0 12h8v3H0z" fill="#fc6f7c" />
        </svg>
        <span className="pt-px tracking-[0.900px]">표현 방식</span>
      </div>
      <div className="-mt-px h-[575px] w-[204px] border border-t-0 border-[#d4d4d4] bg-[#fafafa] pt-[15px] pl-[13px] text-[12.500px] whitespace-nowrap text-black">
        <Thumbnails />
        <div className="mt-[17px] ml-[2px] leading-[20px] tracking-[0.600px]">분산형 차트의 경우 다음 시도:</div>
        <div className="mt-[4px] ml-[2px] flex h-[21px] items-center">
          <span className="pt-[3px] tracking-[0.300px]">0개 이상</span>
          <span className="ml-[5px] h-[21px] w-12 rounded-full bg-[#4996b2] text-center leading-[19px] text-white">차원</span>
        </div>
        <div className="mt-[8px] ml-[2px] flex h-[21px] items-center">
          <span className="pt-[3px]">2~4개</span>
          <span className="ml-[5px] h-[21px] w-[60px] rounded-full bg-[#00b180] text-center leading-[19px] text-white">측정값</span>
        </div>
      </div>
    </div>
  );
}

/* ---------- pill context menu ---------- */

function ContextMenu() {
  return (
    <div className="absolute top-[102px] left-[784px] w-[175px] border border-[#dcdcdc] bg-[#fafafa] p-[2px] pr-[3px] text-[13px] text-black shadow-[2px_2px_2px_rgba(0,0,0,0.500)]">
      <div className="bg-linear-to-r from-[#efefef] from-[25px] via-[#fafafa] via-[25px] to-[#efefef] to-[28px]">
        {CONTEXT_MENU.map((group, gi) => (
          <div key={gi}>
            {gi > 0 && <div className="ml-[28px] h-[9px] pt-1"><div className="h-px bg-[#d2d2d2]" /></div>}
            {group.map((e) => (
              <div key={e.label} className={`flex h-[22px] items-center ${e.active ? 'bg-[#91c9f7]' : ''} ${e.bold ? 'font-bold' : ''}`}>
                <span className="flex w-[22px] shrink-0 justify-center">
                  {e.mark === 'check' && <Svg w={10} h={10}><path d="m1 5 3 3.500L9.500 2" strokeWidth="1" /></Svg>}
                  {e.mark === 'dot' && <span className="size-1 rounded-full bg-black" />}
                  {e.mark === 'delta' && <Svg w={10} h={11} className="text-[#333]"><path d="M4.500 1 1 9.500h8z" /><path d="M5 1.500 9 9.500" strokeWidth="1.600" /></Svg>}
                </span>
                <span className="ml-[10px] pt-px whitespace-nowrap">{e.label}</span>
                {e.sub && (
                  <svg width="4" height="8" viewBox="0 0 4 8" className="mr-[11px] ml-auto"><path d="M0 0v8l4-4z" /></svg>
                )}
              </div>
            ))}
          </div>
        ))}
      </div>
    </div>
  );
}

/* ---------- bottom ---------- */

const TABS = [
  { label: '고객 세그먼트별 매출_불연속형', cls: 'w-[184px] bg-[#e5e5e5]' },
  { label: '고객 세그먼트별 매출_연속형', cls: 'w-[171px] bg-[#fafafa]' },
  { label: '시트 3', cls: 'w-[48px] bg-[#e5e5e5]' },
  { label: '차이 시각화/이서준, 서울특별시', cls: 'w-[186px] bg-[#e5e5e5]' },
  { label: '시트 5', cls: 'w-[48px] bg-[#e5e5e5]' },
  { label: '시트 6', cls: 'w-[48px] bg-[#e5e5e5]' },
  { label: '시트 7', cls: 'w-[48px] bg-[#e5e5e5]' },
  { label: '시트 8', cls: 'w-[48px] bg-[#e5e5e5]' },
  { label: '시트 9', cls: 'w-[48px] bg-[#e5e5e5]' },
];

function SheetTabs() {
  return (
    <div className="flex h-[31px] shrink-0 border-y border-[#c6c6c6] bg-[#e5e5e5] text-[13px] tracking-[0.080px] whitespace-nowrap text-[#555]">
      <span className="flex w-[129px] shrink-0 items-center border-r border-[#c6c6c6] pl-[6px]">
        <Database className="mr-[5px]" />데이터 원본
      </span>
      {TABS.map((t) => (
        <span key={t.label} className={`flex shrink-0 items-center justify-center border-r border-[#c6c6c6] pr-px ${t.cls}`}>{t.label}</span>
      ))}
      <span className="flex w-8 shrink-0 items-center justify-center border-r border-[#c6c6c6]">
        <Svg w={16} h={16}><path d="M9 12.500H1.500v-11h11V9M5 7v3M7.200 5v5M9.500 6v3" strokeWidth="1" /><path d="M11.500 9v7M8 12.500h7" strokeWidth="1.700" /></Svg>
      </span>
      <span className="flex w-8 shrink-0 items-center justify-center border-r border-[#c6c6c6]">
        <Svg w={16} h={16}><path d="M9 12.500H1.500v-11h11V9M7 1.500v11M1.500 7h11" strokeWidth="1" /><path d="M11.500 9v7M8 12.500h7" strokeWidth="1.700" /></Svg>
      </span>
      <span className="flex w-8 shrink-0 items-center justify-center border-r border-[#c6c6c6]">
        <Svg w={16} h={16}><path d="M7 12.500 5 11l-3.500 1.500v-10L5 1.500l2 1.500 2-1.500 3.500 1V9M7 3v7" strokeWidth="1" /><path d="M11.500 9v7M8 12.500h7" strokeWidth="1.700" /></Svg>
      </span>
    </div>
  );
}

function StatusBar() {
  return (
    <div className="flex h-[13px] shrink-0 overflow-hidden bg-[#ebebeb] text-[12px] leading-[22px] whitespace-nowrap text-[#222]">
      <span className="w-[72px] shrink-0 pl-px">6개 마크</span>
      <span className="w-[110px] shrink-0">행 3개 &nbsp; x &nbsp; 열 2개</span>
      <span className="w-[1037px] shrink-0 tracking-[-0.400px]">합계(매출): 7,314,273,771</span>
      <span className="flex w-[129px] shrink-0 border-x border-[#cfcfcf] pl-[7px]">
        <Svg w={10} h={13} className="mt-[3px] mr-[9px]"><circle cx="5" cy="3" r="2.200" strokeWidth="1" /><path d="M1 13V8.500h8V13" strokeWidth="1" /></Svg>
        <span className="tracking-[-0.650px]">sanghee park</span>
        <svg width="8" height="5" viewBox="0 0 8 5" className="mt-[8px] mr-[7px] ml-auto"><path d="M0 0h8L4 4.500z" /></svg>
      </span>
      <span className="w-[27px] shrink-0 border-r border-[#cfcfcf]" />
      <span className="w-[27px] shrink-0 border-r border-[#cfcfcf]" />
      <span className="w-[47px] shrink-0 border-r border-[#cfcfcf]" />
      <svg width="70" height="13" viewBox="0 0 70 13" fill="#bbb" className="shrink-0">
        <path d="M8 5h1.500v8H8zM14 5v8l-4-4zM29 5v8l-4-4zM41 5v8l4-4zM56 5v8l4-4zM61 5h1.500v8H61z" />
      </svg>
      <svg width="67" height="13" viewBox="0 0 67 13" fill="#b5b5b5" className="shrink-0 border-l border-[#cfcfcf]">
        <path d="M8 4h3v3H8zM12 4h3v3h-3zM16 4h3v3h-3zM8 8h3v3H8zM12 8h3v3h-3zM16 8h3v3h-3zM8 12h3v1H8zM12 12h3v1h-3zM16 12h3v1h-3zM29 4h11v7H29zM29 12h3v1h-3zM33 12h3v1h-3zM37 12h3v1h-3z" />
        <path d="M50 4h11v9H50z" fill="#666" />
      </svg>
    </div>
  );
}

export default function App() {
  return (
    <div className="relative flex h-[819px] w-[1586px] flex-col overflow-hidden bg-[#f4f4f4] font-['Open_Sans','Noto_Sans_CJK_KR',sans-serif]">
      <TitleBar />
      <MenuBar />
      <Toolbar />
      <main className="flex h-[688px] shrink-0">
        <DataPane />
        <CardsColumn />
        <div className="ml-[6px] flex w-[887px] shrink-0 flex-col">
          <Shelves />
          <div className="mt-[6px] flex h-[612px] gap-[6px]">
            <Worksheet />
            <Legend />
          </div>
        </div>
        <DataGuide />
      </main>
      <SheetTabs />
      <StatusBar />
      <ShowMe />
      <ContextMenu />
      <div className="absolute top-[459px] left-[788px] h-[55px] w-[189px] border-3 border-[#fb0d0d]" />
    </div>
  );
}
